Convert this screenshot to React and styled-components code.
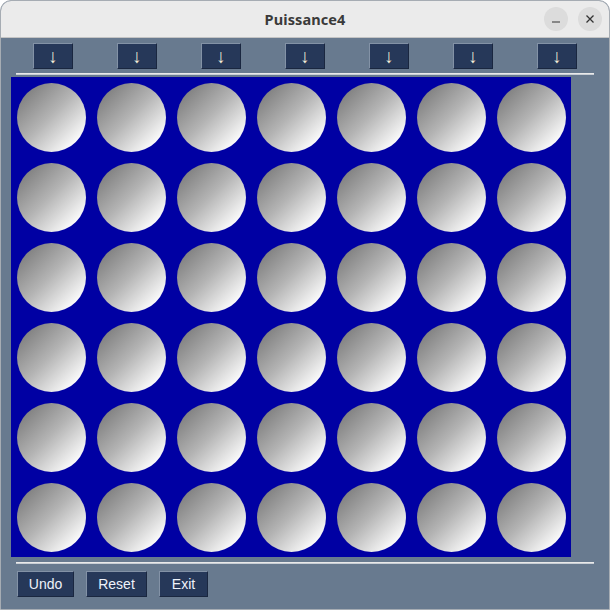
import React from "react";
import styled, { createGlobalStyle } from "styled-components";

const Global = createGlobalStyle`
  html, body {
    margin: 0;
    padding: 0;
    background: #ffffff;
  }
  * {
    box-sizing: border-box;
  }
`;

const Window = styled.div`
  width: 610px;
  height: 610px;
  display: flex;
  flex-direction: column;
  border: 1px solid #a6acb3;
  border-radius: 11px 11px 0 0;
  overflow: hidden;
  background: #687a8f;
`;

const TitleBar = styled.div`
  height: 37px;
  flex: none;
  background: #ebebeb;
  border-bottom: 1px solid #c4c4c4;
  display: flex;
  align-items: center;
  justify-content: center;
  position: relative;
`;

const Title = styled.div`
  font-family: "Noto Sans", "DejaVu Sans", sans-serif;
  font-weight: 700;
  font-size: 14.5px;
  color: #3a3a3a;
  letter-spacing: 0.1px;
`;

const Controls = styled.div`
  position: absolute;
  right: 7px;
  top: 6px;
  display: flex;
  gap: 10px;
`;

const WinButton = styled.div`
  width: 24px;
  height: 24px;
  border-radius: 50%;
  background: #dcdcdc;
  display: flex;
  align-items: center;
  justify-content: center;
`;

const Content = styled.div`
  flex: 1;
  display: flex;
  flex-direction: column;
`;

const DropRow = styled.div`
  display: flex;
  gap: 44px;
  padding: 5px 0 0 32px;
`;

const ActionButton = styled.button`
  height: 26px;
  width: ${({ $w }) => $w}px;
  padding: 0;
  background: #263859;
  color: #eef2fa;
  font-family: "Liberation Sans", Arial, sans-serif;
  font-size: 14px;
  border: 1px solid;
  border-color: #8392a6 #1a2740 #1a2740 #8392a6;
  display: flex;
  align-items: center;
  justify-content: center;
  cursor: pointer;
`;

const Arrow = styled.span`
  font-family: "Liberation Sans", sans-serif;
  font-size: 19px;
  line-height: 1;
  color: #f2ecd8;
`;

const Separator = styled.div`
  height: 2px;
  margin: ${({ $m }) => $m};
  background: #e9e9e9;
  border-bottom: 1px solid #c9ced5;
`;

const Board = styled.div`
  width: 560px;
  height: 480px;
  margin-left: 10px;
  background: #0000a3;
  display: grid;
  grid-template-columns: repeat(7, 80px);
  grid-template-rows: repeat(6, 80px);
`;

const Cell = styled.div`
  display: flex;
  align-items: center;
  justify-content: center;
`;

const Disc = styled.div`
  width: 69px;
  height: 69px;
  border-radius: 50%;
  background: linear-gradient(135deg, #6e6e6e 0%, #b4b4b4 48%, #ffffff 88%);
`;

const BottomRow = styled.div`
  display: flex;
  gap: 12px;
  padding: 7px 0 0 16px;
`;

const cells = Array.from({ length: 42 }, (_, i) => i);

export default function App() {
  return (
    <>
      <Global />
      <Window>
        <TitleBar>
          <Title>Puissance4</Title>
          <Controls>
            <WinButton>
              <svg width="10" height="10" viewBox="0 0 10 10">
                <path d="M1 8h8" stroke="#333" strokeWidth="1.2" />
              </svg>
            </WinButton>
            <WinButton>
              <svg width="10" height="10" viewBox="0 0 10 10">
                <path d="M1.5 1.5l7 7M8.5 1.5l-7 7" stroke="#333" strokeWidth="1.3" />
              </svg>
            </WinButton>
          </Controls>
        </TitleBar>
        <Content>
          <DropRow>
            {Array.from({ length: 7 }, (_, i) => (
              <ActionButton key={i} $w={40}>
                <Arrow>↓</Arrow>
              </ActionButton>
            ))}
          </DropRow>
          <Separator $m="4px 15px 2px 15px" />
          <Board>
            {cells.map((i) => (
              <Cell key={i}>
                <Disc />
              </Cell>
            ))}
          </Board>
          <Separator $m="5px 15px 0 15px" />
          <BottomRow>
            <ActionButton $w={57}>Undo</ActionButton>
            <ActionButton $w={61}>Reset</ActionButton>
            <ActionButton $w={49}>Exit</ActionButton>
          </BottomRow>
        </Content>
      </Window>
    </>
  );
}
